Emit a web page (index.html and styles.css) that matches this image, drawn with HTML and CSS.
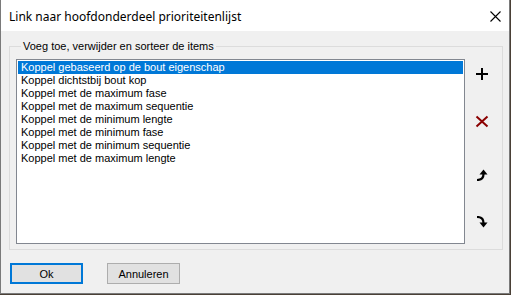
FILE: index.html
```html
<!DOCTYPE html>
<html lang="nl">
<head>
    <meta charset="UTF-8">
    <title>Link naar hoofdonderdeel prioriteitenlijst</title>
    <link rel="stylesheet" href="styles.css">
</head>
<body>
    <div class="window">
        <div class="titlebar">
            <span class="title">Link naar hoofdonderdeel prioriteitenlijst</span>
            <svg class="close" width="11" height="11" viewBox="0 0 11 11">
                <path d="M0.5 0.5L10.5 10.5M10.5 0.5L0.5 10.5" stroke="#000" stroke-width="1.1" fill="none"/>
            </svg>
        </div>

        <div class="dialog-body">
            <!-- Group box with list and tool buttons -->
            <fieldset class="group">
                <legend class="group-label">Voeg toe, verwijder en sorteer de items</legend>
                <div class="group-inner">
                    <ul class="listbox">
                        <li class="list-item selected">Koppel gebaseerd op de bout eigenschap</li>
                        <li class="list-item">Koppel dichtstbij bout kop</li>
                        <li class="list-item">Koppel met de maximum fase</li>
                        <li class="list-item">Koppel met de maximum sequentie</li>
                        <li class="list-item">Koppel met de minimum lengte</li>
                        <li class="list-item">Koppel met de minimum fase</li>
                        <li class="list-item">Koppel met de minimum sequentie</li>
                        <li class="list-item">Koppel met de maximum lengte</li>
                    </ul>
                    <div class="tools">
                        <button class="tool tool-add" title="Toevoegen">
                            <svg width="14" height="14" viewBox="0 0 14 14">
                                <path d="M7 1V13M1 7H13" stroke="#000" stroke-width="2" fill="none" shape-rendering="crispEdges"/>
                            </svg>
                        </button>
                        <button class="tool tool-remove" title="Verwijderen">
                            <svg width="14" height="13" viewBox="0 0 14 13">
                                <path d="M1.5 1.5L12.5 11.5M12.5 1.5L1.5 11.5" stroke="#8b0000" stroke-width="2" fill="none"/>
                            </svg>
                        </button>
                        <button class="tool tool-up" title="Omhoog">
                            <svg width="13" height="13" viewBox="0 0 13 13">
                                <path d="M1 12C5.5 12 7.5 10 7.5 6" stroke="#000" stroke-width="2.2" fill="none"/>
                                <path d="M3.5 6.5L11.5 6.5L7.5 1.5Z" fill="#000"/>
                            </svg>
                        </button>
                        <button class="tool tool-down" title="Omlaag">
                            <svg width="13" height="13" viewBox="0 0 13 13">
                                <path d="M1 1C5.5 1 7.5 3 7.5 7" stroke="#000" stroke-width="2.2" fill="none"/>
                                <path d="M3.5 6.5L11.5 6.5L7.5 11.5Z" fill="#000"/>
                            </svg>
                        </button>
                    </div>
                </div>
            </fieldset>

            <div class="button-row">
                <button class="btn btn-default">Ok</button>
                <button class="btn">Annuleren</button>
            </div>
        </div>
    </div>
</body>
</html>
```

FILE: styles.css
```css
body {
    margin: 0;
    background-color: #4a4036;
    font-family: 'Liberation Sans', Arial, sans-serif;
    font-size: 11px;
    color: #000000;
}

.window {
    width: 510px;
    height: 294px;
    box-sizing: border-box;
    border: 1px solid #7a7a7a;
    border-top: none;
    background-color: #f0f0f0;
    display: flex;
    flex-direction: column;
}

.titlebar {
    height: 31px;
    background-color: #ffffff;
    display: flex;
    align-items: center;
    justify-content: space-between;
    padding: 0 8px 0 8px;
    flex-shrink: 0;
}

.title {
    font-family: 'Noto Sans', sans-serif;
    font-size: 12px;
    color: #000000;
    padding-top: 1px;
}

.close {
    display: block;
    margin-top: 1px;
}

.dialog-body {
    padding: 0 0 0 8px;
}

.group {
    width: 494px;
    box-sizing: border-box;
    margin: 9px 0 0 0;
    padding: 6px 0 5px 6px;
    border: 1px solid #dcdcdc;
    min-width: 0;
}

.group-label {
    padding: 0 2px;
    margin-left: 5px;
    line-height: 13px;
    font-size: 11px;
}

.group-inner {
    display: flex;
}

.listbox {
    list-style: none;
    margin: 0;
    padding: 1px;
    width: 449px;
    height: 185px;
    box-sizing: border-box;
    border: 1px solid #828790;
    background-color: #ffffff;
}

.list-item {
    height: 13px;
    line-height: 13px;
    padding-left: 3px;
    white-space: nowrap;
}

.list-item.selected {
    background-color: #0078d7;
    color: #ffffff;
}

.tools {
    width: 34px;
    display: flex;
    flex-direction: column;
    align-items: center;
}

.tool {
    width: 24px;
    height: 24px;
    padding: 0;
    border: none;
    background: transparent;
    display: flex;
    align-items: center;
    justify-content: center;
}

.tool svg {
    display: block;
}

.tool-add {
    margin-top: 3px;
}

.tool-remove {
    margin-top: 23px;
}

.tool-up {
    margin-top: 29px;
}

.tool-down {
    margin-top: 24px;
}

.button-row {
    display: flex;
    gap: 24px;
    margin-top: 13px;
    padding-left: 1px;
}

.btn {
    width: 73px;
    height: 21px;
    box-sizing: border-box;
    background-color: #e1e1e1;
    border: 1px solid #adadad;
    font-family: 'Liberation Sans', Arial, sans-serif;
    font-size: 11px;
    color: #000000;
    padding: 0;
}

.btn-default {
    border: 2px solid #0078d7;
}
```
